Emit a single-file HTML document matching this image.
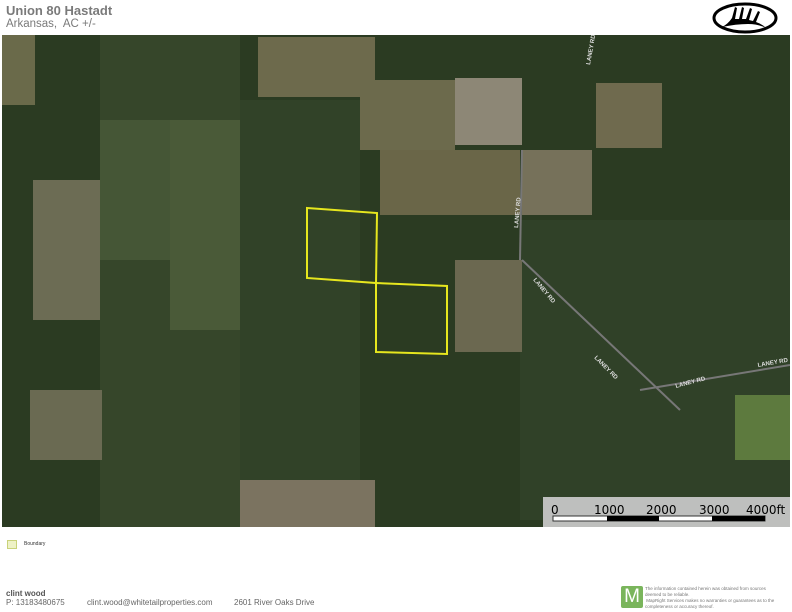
<!DOCTYPE html>
<html><head><style>
body{margin:0;width:792px;height:612px;background:#fff;position:relative;overflow:hidden;font-family:"Liberation Sans",Arial,sans-serif}
.t{position:absolute;color:#777}
</style></head><body>
<div class="t" style="left:6px;top:3px;font-size:13px;font-weight:bold;color:#7a7a7a">Union 80 Hastadt</div>
<div class="t" style="left:6px;top:18px;font-size:11.5px;color:#7a7a7a">Arkansas,&nbsp; AC +/-</div>
<svg style="position:absolute;left:712px;top:2px" width="66" height="32" viewBox="0 0 66 32">
<ellipse cx="33" cy="16" rx="31" ry="14" fill="#fff" stroke="#000" stroke-width="3"/>
<path d="M10 25 Q16 22 20 16 L23 5 L25 6 L23 17 L27 17 L30 5 L32 6 L30 17 L34 17 L38 6 L40 7 L37 18 L41 19 L46 9 L48 10 L44 20 Q50 22 54 26 Q46 22 36 22 Q24 22 10 25 Z" fill="#000"/>
</svg>
<svg style="position:absolute;left:2px;top:35px" width="788" height="492" viewBox="2 35 788 492">
<rect x="2" y="35" width="788" height="492" fill="#2b3b22"/>
<rect x="100" y="35" width="140" height="492" fill="#36462a"/>
<rect x="240" y="100" width="120" height="400" fill="#314228"/>
<rect x="520" y="220" width="270" height="300" fill="#304128"/>
<rect x="2" y="35" width="33" height="70" fill="#6a6a4a"/>
<rect x="258" y="37" width="117" height="60" fill="#6d6a4c"/>
<rect x="360" y="80" width="95" height="70" fill="#6c6a4c"/>
<rect x="455" y="78" width="67" height="67" fill="#8d8776"/>
<rect x="380" y="150" width="140" height="65" fill="#6a6648"/>
<rect x="522" y="150" width="70" height="65" fill="#76715a"/>
<rect x="596" y="83" width="66" height="65" fill="#6f6a4e"/>
<rect x="455" y="260" width="67" height="92" fill="#6b6850"/>
<rect x="240" y="480" width="135" height="47" fill="#7b7360"/>
<rect x="33" y="180" width="67" height="140" fill="#6c6c54"/>
<rect x="30" y="390" width="72" height="70" fill="#6a6a52"/>
<rect x="170" y="120" width="70" height="210" fill="#4a5a38"/>
<rect x="100" y="120" width="70" height="140" fill="#455636"/>
<rect x="735" y="395" width="55" height="65" fill="#5d7a3e"/>
<line x1="522" y1="260" x2="680" y2="410" stroke="#777" stroke-width="2"/>
<line x1="640" y1="390" x2="790" y2="365" stroke="#777" stroke-width="2"/>
<line x1="522" y1="150" x2="520" y2="260" stroke="#777" stroke-width="2"/>
<polygon points="307,208 377,213 376,283 307,278" fill="none" stroke="#e6e61e" stroke-width="2"/>
<polygon points="376,283 447,286 447,354 376,352" fill="none" stroke="#e6e61e" stroke-width="2"/>
<g fill="#ddd" font-size="6" font-weight="bold">
<text x="590" y="65" transform="rotate(-80 590 65)">LANEY RD</text>
<text x="518" y="228" transform="rotate(-85 518 228)">LANEY RD</text>
<text x="533" y="280" transform="rotate(50 533 280)">LANEY RD</text>
<text x="594" y="358" transform="rotate(45 594 358)">LANEY RD</text>
<text x="676" y="388" transform="rotate(-15 676 388)">LANEY RD</text>
<text x="758" y="367" transform="rotate(-10 758 367)">LANEY RD</text>
</g>
<rect x="543" y="497" width="247" height="30" fill="#c6c6c6" opacity="0.95"/>
<g font-family="DejaVu Sans,sans-serif" font-size="12" fill="#000">
<text x="551" y="514">0</text><text x="594" y="514">1000</text><text x="646" y="514">2000</text><text x="699" y="514">3000</text><text x="746" y="514">4000ft</text>
</g>
<rect x="553" y="516" width="212" height="5" fill="#fff" stroke="#333" stroke-width="1"/>
<rect x="607" y="516" width="52" height="5" fill="#000"/>
<rect x="712" y="516" width="53" height="5" fill="#000"/>
</svg>
<div style="position:absolute;left:7px;top:540px;width:8px;height:7px;border:1.5px solid #c9d27a;background:#eef2c6"></div>
<div class="t" style="left:24px;top:541px;font-size:5px;color:#333">Boundary</div>
<div class="t" style="left:6px;top:589px;font-size:8px;font-weight:bold;color:#555">clint wood</div>
<div class="t" style="left:6px;top:598px;font-size:8px;color:#666">P: 13183480675</div>
<div class="t" style="left:87px;top:598px;font-size:8px;color:#666">clint.wood@whitetailproperties.com</div>
<div class="t" style="left:234px;top:598px;font-size:8px;color:#666">2601 River Oaks Drive</div>
<div style="position:absolute;left:621px;top:586px;width:22px;height:22px;background:#7ab55c;border-radius:2px;color:#fff;font-size:19px;line-height:22px;text-align:center">M</div>
<div class="t" style="left:645px;top:586px;font-size:4.5px;line-height:6px;color:#777;width:150px">The information contained herein was obtained from sources<br>deemed to be reliable.<br>&nbsp;MapRight Services makes no warranties or guarantees as to the<br>completeness or accuracy thereof.</div>
</body></html>
